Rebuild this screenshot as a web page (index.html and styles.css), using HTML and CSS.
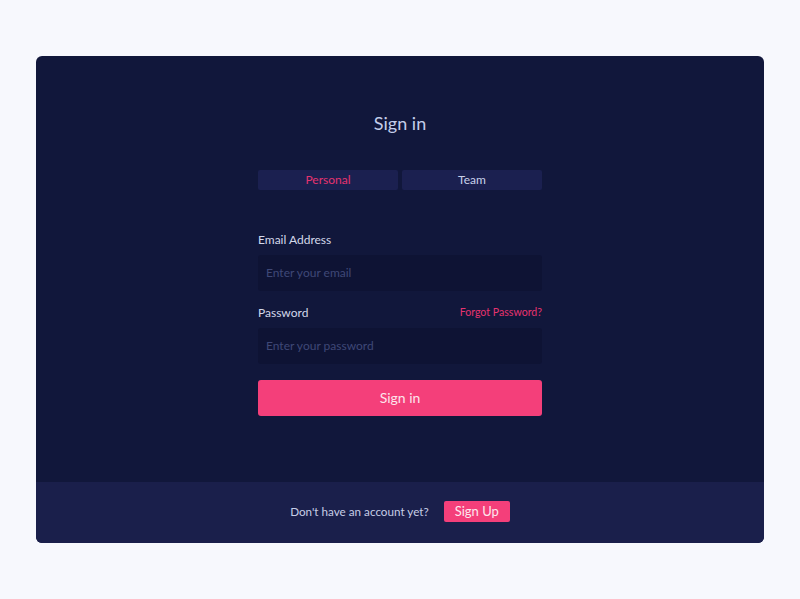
FILE: index.html
```html
<!DOCTYPE html>
<html>
<head>
<meta charset="utf-8">
<link rel="stylesheet" href="styles.css">
</head>
<body>
<div class="card">
  <div class="main">
    <h1 class="title">Sign in</h1>
    <div class="form">
      <div class="tabs">
        <div class="tab active">Personal</div>
        <div class="tab">Team</div>
      </div>
      <label class="label label-email">Email Address</label>
      <div class="input">Enter your email</div>
      <div class="label-row">
        <span class="label">Password</span>
        <span class="forgot">Forgot Password?</span>
      </div>
      <div class="input">Enter your password</div>
      <div class="btn">Sign in</div>
    </div>
  </div>
  <div class="footer">
    <span class="footer-text">Don't have an account yet?</span>
    <span class="signup">Sign Up</span>
  </div>
</div>
</body>
</html>
```

FILE: styles.css
```css
* { box-sizing: border-box; }
body {
  margin: 0;
  background: #f7f8fd;
  font-family: Lato, "Open Sans", sans-serif;
  height: 599px;
}
.card {
  margin: 56px 36px 0;
  height: 487px;
  background: #11173b;
  border-radius: 6px;
  overflow: hidden;
  display: flex;
  flex-direction: column;
}
.main {
  height: 426px;
  padding-top: 55px;
  display: flex;
  flex-direction: column;
  align-items: center;
}
.title {
  margin: 0;
  font-weight: 400;
  font-size: 18px;
  line-height: 24px;
  color: #c3cdea;
}
.form {
  width: 284px;
  margin-top: 35px;
  display: flex;
  flex-direction: column;
}
.tabs {
  display: flex;
  gap: 4px;
  height: 20px;
}
.tab {
  flex: 1;
  background: #1b2050;
  border-radius: 2px;
  font-size: 12px;
  line-height: 20px;
  text-align: center;
  color: #c8d0ea;
}
.tab.active { color: #e6336f; }
.label {
  font-size: 12px;
  line-height: 16px;
  color: #d3d8ea;
}
.label-email {
  display: block;
  margin-top: 42px;
}
.input {
  margin-top: 7px;
  height: 36px;
  background: #0e1334;
  border-radius: 3px;
  padding-left: 8px;
  font-size: 12px;
  line-height: 36px;
  color: #3f4877;
}
.label-row {
  margin-top: 14px;
  display: flex;
  justify-content: space-between;
  align-items: flex-start;
}
.forgot {
  font-size: 10.6px;
  line-height: 14px;
  color: #e6336f;
}
.btn {
  margin-top: 16px;
  height: 36px;
  background: #f43f7a;
  border-radius: 3px;
  color: #fde4ec;
  font-size: 14px;
  line-height: 36px;
  text-align: center;
}
.footer {
  flex: 1;
  background: #1a1f4b;
  display: flex;
  justify-content: center;
  align-items: center;
  gap: 15px;
  padding-bottom: 3px;
}
.footer-text {
  font-size: 11.7px;
  color: #c7cde6;
}
.signup {
  background: #f43f7a;
  color: #fde8ef;
  font-size: 13px;
  line-height: 21px;
  padding: 0 11px;
  border-radius: 2px;
}
```
